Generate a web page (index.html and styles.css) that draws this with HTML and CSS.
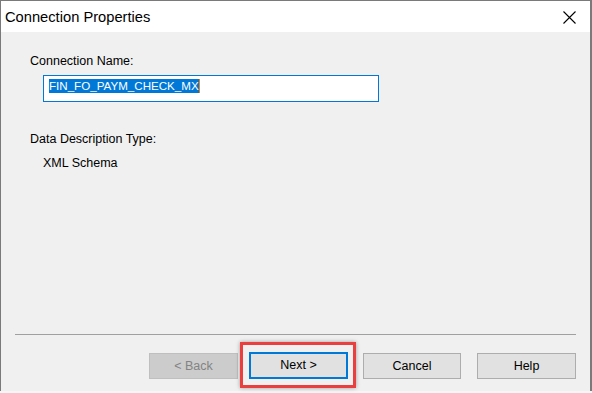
FILE: index.html
```html
<!DOCTYPE html>
<html>
<head>
<meta charset="utf-8">
<link rel="stylesheet" href="styles.css">
</head>
<body>
<div class="window">
  <div class="titlebar">
    <span class="title">Connection Properties</span>
    <svg class="close" width="13" height="13" viewBox="0 0 13 13"><path d="M0.5 0.5L12.5 12.5M12.5 0.5L0.5 12.5" stroke="#000" stroke-width="1.1" fill="none"/></svg>
  </div>
  <div class="content">
    <div class="main">
      <div class="label">Connection Name:</div>
      <div class="input"><span class="sel">FIN_FO_PAYM_CHECK_MX</span><span class="caret"></span></div>
      <div class="label label-type">Data Description Type:</div>
      <div class="value">XML Schema</div>
    </div>
    <div class="footer">
      <div class="sep"></div>
      <div class="buttons">
        <div class="btn btn-back">&lt; Back</div>
        <div class="next-wrap">
          <div class="btn btn-next">Next &gt;</div>
          <div class="highlight"></div>
        </div>
        <div class="btn btn-cancel">Cancel</div>
        <div class="btn btn-help">Help</div>
      </div>
    </div>
  </div>
</div>
<div class="under"></div>
</body>
</html>
```
FILE: styles.css
```css
html, body {
  margin: 0;
  padding: 0;
  background: #ffffff;
  font-family: "Liberation Sans", Arial, sans-serif;
}
.window {
  width: 592px;
  height: 391px;
  box-sizing: border-box;
  border: 1px solid #7a7a7a;
  border-bottom: none;
  border-right-width: 2px;
  display: flex;
  flex-direction: column;
  background: #f0f0f0;
}
.titlebar {
  height: 31px;
  background: #ffffff;
  display: flex;
  align-items: center;
  padding-left: 4px;
  padding-right: 14px;
  flex: none;
}
.title {
  font-size: 14.7px;
  color: #000;
  flex: 1;
  padding-top: 1px;
}
.close {
  display: block;
  margin-top: 1px;
}
.content {
  flex: 1;
  display: flex;
  flex-direction: column;
  background: #f0f0f0;
}
.main {
  padding: 22px 0 0 29px;
  flex: 1;
}
.label {
  font-size: 12.5px;
  line-height: 15px;
  color: #000;
}
.input {
  margin: 6px 0 0 13px;
  width: 336px;
  height: 27px;
  box-sizing: border-box;
  border: 1px solid #0078d7;
  background: #fff;
  padding: 3px 0 0 5px;
  display: flex;
  align-items: flex-start;
}
.sel {
  background: #0078d7;
  color: #fff;
  font-size: 11.6px;
  line-height: 14px;
  height: 14px;
  display: block;
  white-space: nowrap;
}
.caret {
  display: block;
  width: 1px;
  height: 14px;
  background: #e8830f;
}
.label-type {
  margin-top: 30px;
}
.value {
  font-size: 12.5px;
  line-height: 15px;
  color: #000;
  margin: 9px 0 0 13px;
}
.footer {
  flex: none;
  padding: 0 14px 12px 14px;
}
.sep {
  height: 1px;
  background: #a0a0a0;
  margin-bottom: 18px;
}
.buttons {
  display: flex;
  justify-content: flex-end;
  align-items: flex-start;
}
.btn {
  height: 26px;
  box-sizing: border-box;
  border: 1px solid #adadad;
  background: #e1e1e1;
  font-size: 12.5px;
  line-height: 24px;
  text-align: center;
  color: #000;
}
.btn-back {
  width: 89px;
  background: #cccccc;
  border-color: #bfbfbf;
  color: #838383;
  margin-right: 11px;
}
.next-wrap {
  position: relative;
  margin-right: 15px;
}
.btn-next {
  width: 99px;
  border: 2px solid #0078d7;
  line-height: 22px;
  margin-top: -1px;
  height: 27px;
}
.highlight {
  position: absolute;
  top: -11px;
  bottom: -9px;
  left: -9px;
  right: -8px;
  border: 3px solid #e9403f;
  box-shadow: 0 0 4px rgba(0, 0, 0, 0.35);
}
.btn-cancel {
  width: 98px;
  margin-right: 16px;
}
.btn-help {
  width: 99px;
}
.under {
  height: 2px;
  background: #f6f6f6;
}
```
